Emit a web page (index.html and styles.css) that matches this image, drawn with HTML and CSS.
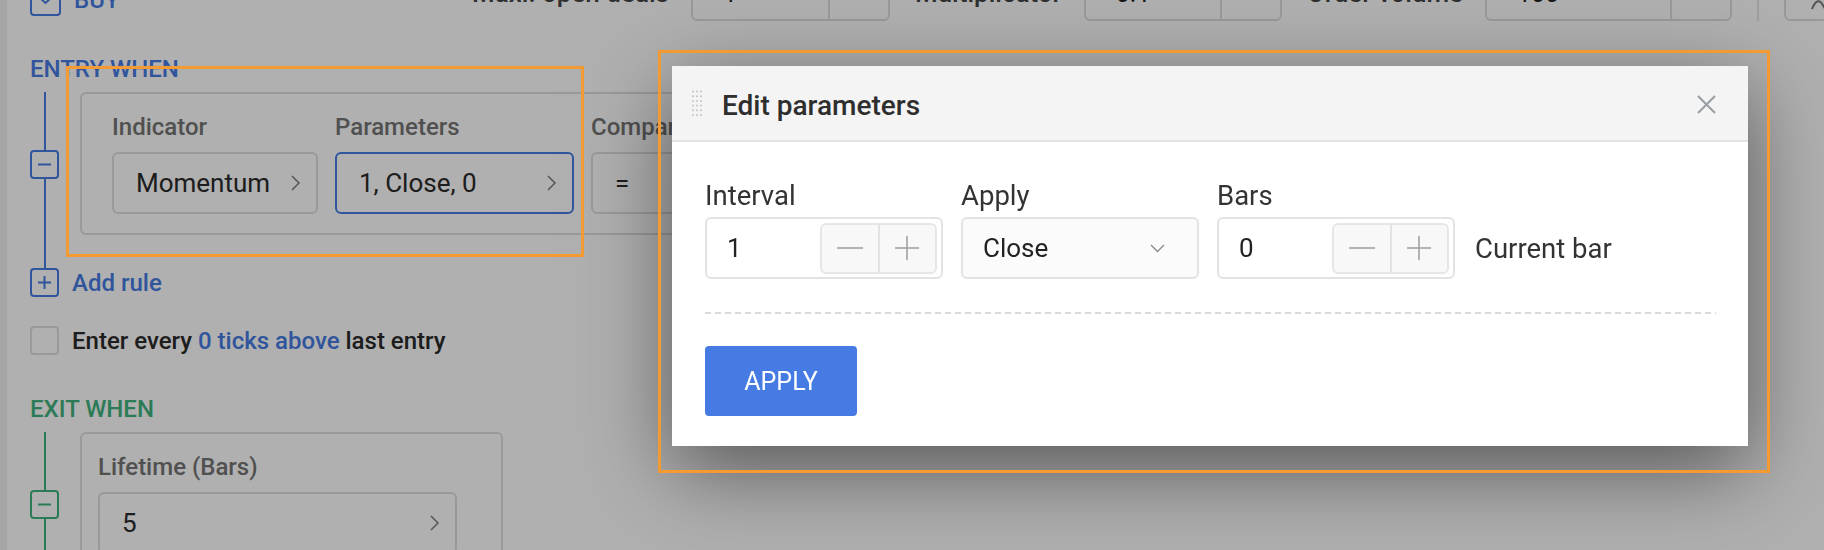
FILE: index.html
```html
<!DOCTYPE html>
<html lang="en">
<head>
    <meta charset="UTF-8">
    <meta name="viewport" content="width=device-width, initial-scale=1.0">
    <title>Edit parameters</title>
    <link rel="stylesheet" href="styles.css">
</head>
<body>

<div class="page">
    <div class="topbar">
        <div class="side">
            <span class="tbox blue">
                <svg width="17" height="10" viewBox="0 0 17 10"><polyline points="1.5,1.5 8.5,8 15.5,1.5" fill="none" stroke="currentColor" stroke-width="2"/></svg>
            </span>
            <span class="side-name">BUY</span>
        </div>
        <div class="field">
            <span class="field-label">Maxi. open deals</span>
            <div class="num-box w-deals"><span class="num-val">1</span><span class="num-btn"></span></div>
        </div>
        <div class="field">
            <span class="field-label">Multiplicator</span>
            <div class="num-box w-mult"><span class="num-val">0.1</span><span class="num-btn"></span></div>
        </div>
        <div class="field">
            <span class="field-label">Order volume</span>
            <div class="num-box w-vol"><span class="num-val">100</span><span class="num-btn"></span></div>
        </div>
        <span class="vsep"></span>
        <div class="tool-box">
            <svg width="30" height="20" viewBox="0 0 30 20"><path d="M2 14 C6 4, 10 4, 14 12 S22 20, 28 8" fill="none" stroke="#777" stroke-width="2"/></svg>
        </div>
    </div>

    <div class="section-title">ENTRY WHEN</div>
    <div class="tree blue">
        <div class="tree-row">
            <div class="rail">
                <span class="rail-line top"></span>
                <span class="tbox">
                    <svg width="13" height="13" viewBox="0 0 13 13"><line x1="0" y1="6.5" x2="13" y2="6.5" stroke="currentColor" stroke-width="2"/></svg>
                </span>
                <span class="rail-line rest"></span>
            </div>
            <div class="rule-card">
                <div class="rule-col">
                    <div class="rule-label">Indicator</div>
                    <div class="pick w-ind">Momentum
                        <svg class="chev" width="9" height="16" viewBox="0 0 9 16"><polyline points="1,1 8,8 1,15" fill="none" stroke="currentColor" stroke-width="1.5"/></svg>
                    </div>
                </div>
                <div class="rule-col">
                    <div class="rule-label">Parameters</div>
                    <div class="pick w-par active">1, Close, 0
                        <svg class="chev" width="9" height="16" viewBox="0 0 9 16"><polyline points="1,1 8,8 1,15" fill="none" stroke="currentColor" stroke-width="1.5"/></svg>
                    </div>
                </div>
                <div class="rule-col">
                    <div class="rule-label">Comparison</div>
                    <div class="pick w-cmp">=
                        <svg class="chev" width="9" height="16" viewBox="0 0 9 16"><polyline points="1,1 8,8 1,15" fill="none" stroke="currentColor" stroke-width="1.5"/></svg>
                    </div>
                </div>
            </div>
        </div>
        <div class="add-row">
            <span class="tbox">
                <svg width="13" height="13" viewBox="0 0 13 13"><line x1="0" y1="6.5" x2="13" y2="6.5" stroke="currentColor" stroke-width="2"/><line x1="6.5" y1="0" x2="6.5" y2="13" stroke="currentColor" stroke-width="2"/></svg>
            </span>
            <span class="add-text">Add rule</span>
        </div>
    </div>

    <div class="check-row">
        <span class="cbox"></span>
        <span class="check-text">Enter every <span class="link">0 ticks above</span> last entry</span>
    </div>

    <div class="section-title exit">EXIT WHEN</div>
    <div class="tree green">
        <div class="tree-row">
            <div class="rail">
                <span class="rail-line top"></span>
                <span class="tbox">
                    <svg width="13" height="13" viewBox="0 0 13 13"><line x1="0" y1="6.5" x2="13" y2="6.5" stroke="currentColor" stroke-width="2"/></svg>
                </span>
                <span class="rail-line rest"></span>
            </div>
            <div class="rule-card life-card">
                <div class="rule-col">
                    <div class="rule-label">Lifetime (Bars)</div>
                    <div class="pick w-life">5
                        <svg class="chev" width="9" height="16" viewBox="0 0 9 16"><polyline points="1,1 8,8 1,15" fill="none" stroke="currentColor" stroke-width="1.5"/></svg>
                    </div>
                </div>
            </div>
        </div>
    </div>
</div>

<div class="mask"></div>

<div class="modal">
    <div class="modal-head">
        <svg class="grip" width="10" height="26" viewBox="0 0 10 26">
            <g fill="#c4c4c4">
                <circle cx="1" cy="1.5" r="1"/><circle cx="5" cy="1.5" r="1"/><circle cx="9" cy="1.5" r="1"/>
                <circle cx="1" cy="6.2" r="1"/><circle cx="5" cy="6.2" r="1"/><circle cx="9" cy="6.2" r="1"/>
                <circle cx="1" cy="10.9" r="1"/><circle cx="5" cy="10.9" r="1"/><circle cx="9" cy="10.9" r="1"/>
                <circle cx="1" cy="15.6" r="1"/><circle cx="5" cy="15.6" r="1"/><circle cx="9" cy="15.6" r="1"/>
                <circle cx="1" cy="20.3" r="1"/><circle cx="5" cy="20.3" r="1"/><circle cx="9" cy="20.3" r="1"/>
                <circle cx="1" cy="25" r="1"/><circle cx="5" cy="25" r="1"/><circle cx="9" cy="25" r="1"/>
            </g>
        </svg>
        <span class="modal-title">Edit parameters</span>
        <svg class="close" width="19" height="19" viewBox="0 0 19 19"><line x1="1" y1="1" x2="18" y2="18" stroke="#9a9fa5" stroke-width="2.2"/><line x1="18" y1="1" x2="1" y2="18" stroke="#9a9fa5" stroke-width="2.2"/></svg>
    </div>
    <div class="modal-body">
        <div class="param-row">
            <div class="param">
                <label>Interval</label>
                <div class="param-input">1
                    <div class="stepper">
                        <span><svg width="26" height="2" viewBox="0 0 26 2"><line x1="0" y1="1" x2="26" y2="1" stroke="#9c9c9c" stroke-width="1.5"/></svg></span>
                        <span><svg width="24" height="24" viewBox="0 0 24 24"><line x1="0" y1="12" x2="24" y2="12" stroke="#9c9c9c" stroke-width="1.5"/><line x1="12" y1="0" x2="12" y2="24" stroke="#9c9c9c" stroke-width="1.5"/></svg></span>
                    </div>
                </div>
            </div>
            <div class="param">
                <label>Apply</label>
                <div class="param-input select">Close
                    <svg width="15" height="9" viewBox="0 0 15 9"><polyline points="1,1 7.5,7.5 14,1" fill="none" stroke="#8a8a8a" stroke-width="1.4"/></svg>
                </div>
            </div>
            <div class="param">
                <label>Bars</label>
                <div class="param-input">0
                    <div class="stepper">
                        <span><svg width="26" height="2" viewBox="0 0 26 2"><line x1="0" y1="1" x2="26" y2="1" stroke="#9c9c9c" stroke-width="1.5"/></svg></span>
                        <span><svg width="24" height="24" viewBox="0 0 24 24"><line x1="0" y1="12" x2="24" y2="12" stroke="#9c9c9c" stroke-width="1.5"/><line x1="12" y1="0" x2="12" y2="24" stroke="#9c9c9c" stroke-width="1.5"/></svg></span>
                    </div>
                </div>
            </div>
            <div class="param-note">Current bar</div>
        </div>
        <div class="dash"></div>
        <button class="apply-btn">APPLY</button>
    </div>
</div>

<div class="mark mark-rule"></div>
<div class="mark mark-modal"></div>

</body>
</html>
```

FILE: styles.css
```css
* { box-sizing: border-box; }
body {
    margin: 0; width: 1824px; height: 550px; overflow: hidden;
    background: #fff; color: #333;
    font-family: Roboto, "Liberation Sans", sans-serif;
}
.page { display: flow-root; height: 550px; border-left: 7px solid #f1f1f1; padding-left: 23px; }

/* top bar, scrolled mostly out of view */
.topbar { display: flex; align-items: center; gap: 25px; height: 56px; margin-top: -35px; }
.side { flex: 1; display: flex; align-items: center; gap: 13px; margin-top: 14px; }
.side-name { font-size: 24px; font-weight: 500; color: #467be3; }
.field { display: flex; align-items: center; gap: 22px; }
.field-label { font-size: 26px; font-weight: 500; color: #444; white-space: nowrap; }
.num-box { display: flex; height: 56px; border: 2px solid #dedede; border-radius: 6px; }
.num-val { flex: 1; display: flex; align-items: center; padding-left: 30px; font-size: 25px; color: #222; }
.num-btn { width: 60px; border-left: 2px solid #dedede; }
.w-deals { width: 199px; }
.w-mult { width: 198px; }
.w-vol { width: 247px; }
.vsep { width: 2px; height: 56px; background: #e6e6e6; }
.tool-box {
    width: 62px; height: 56px; margin-right: -22px;
    border: 2px solid #dedede; border-radius: 6px;
    display: flex; align-items: flex-end; justify-content: flex-end; padding: 0 4px 4px 0;
}

/* rule tree */
.blue { color: #467be3; }
.green { color: #41b37f; }
.section-title { margin-top: 34px; font-size: 24px; line-height: 28px; font-weight: 500; color: #467be3; }
.section-title.exit { margin-top: 40px; color: #41b37f; }
.tree { margin-top: 9px; }
.tree-row { display: flex; gap: 21px; }
.rail { width: 29px; flex-shrink: 0; display: flex; flex-direction: column; align-items: center; }
.rail-line { width: 2px; background: currentColor; }
.rail-line.top { height: 58px; }
.rail-line.rest { flex: 1; }
.tbox {
    width: 29px; height: 29px; flex-shrink: 0;
    border: 2px solid currentColor; border-radius: 4px;
    display: flex; align-items: center; justify-content: center;
}
.side .tbox { width: 31px; height: 31px; }

.rule-card {
    display: flex; gap: 17px; align-self: flex-start;
    border: 2px solid #dedede; border-radius: 6px;
    padding: 19px 30px; margin-bottom: 33px; color: #2a2a2a;
}
.life-card { width: 423px; padding: 19px 44px 19px 16px; }
.rule-label { font-size: 24px; line-height: 28px; font-weight: 500; color: #757575; margin-bottom: 11px; white-space: nowrap; }
.pick {
    height: 62px; display: flex; align-items: center; justify-content: space-between;
    border: 2px solid #dedede; border-radius: 6px;
    padding: 0 16px 0 22px; font-size: 26px; color: #2a2a2a; white-space: nowrap;
}
.pick.active { border-color: #467be3; }
.chev { color: #7b7b7b; flex-shrink: 0; }
.w-ind { width: 206px; }
.w-par { width: 239px; }
.w-cmp { width: 240px; }
.w-life { width: 359px; }

.add-row { display: flex; align-items: center; gap: 13px; }
.add-text { font-size: 24px; font-weight: 500; color: #467be3; }
.check-row { display: flex; align-items: center; gap: 13px; margin-top: 29px; }
.cbox { width: 29px; height: 29px; border: 2px solid #dedede; border-radius: 4px; background: #fff; }
.check-text { font-size: 24px; font-weight: 500; color: #2a2a2a; }
.link { color: #467be3; }

/* overlay */
.mask { position: fixed; inset: 0; background: rgba(0, 0, 0, 0.31); z-index: 2; }

.modal {
    position: absolute; left: 672px; top: 66px; width: 1076px; z-index: 3;
    background: #fff; box-shadow: 0 24px 80px rgba(0, 0, 0, 0.5);
}
.modal-head {
    height: 76px; display: flex; align-items: center;
    padding: 0 32px 0 20px;
    background: #f4f4f4; border-bottom: 2px solid #e3e3e3;
}
.grip { margin-right: 20px; }
.modal-title { margin-top: 4px; font-size: 28px; font-weight: 500; color: #2e2e2e; }
.close { margin-left: auto; margin-top: 2px; }

.modal-body { padding: 38px 32px 30px 33px; }
.param-row { display: flex; align-items: flex-end; gap: 18px; }
.param label { display: block; font-size: 27.5px; line-height: 32px; margin-bottom: 5px; color: #333; }
.param-input {
    width: 238px; height: 62px; display: flex; align-items: center;
    border: 2px solid #e3e3e3; border-radius: 6px;
    padding-left: 20px; font-size: 26px; color: #222;
}
.param-input.select { justify-content: space-between; padding-right: 32px; background: #fbfbfb; }
.stepper {
    width: 117px; height: 51px; margin-left: auto; margin-right: 4px; display: flex;
    border: 2px solid #e6e6e6; border-radius: 6px; background: #f8f8f8;
}
.stepper span { flex: 1; display: flex; align-items: center; justify-content: center; }
.stepper span + span { border-left: 2px solid #e3e3e3; }
.param-note { height: 62px; display: flex; align-items: center; margin-left: 2px; font-size: 27.5px; color: #333; }
.dash { margin-top: 33px; height: 2px; background: repeating-linear-gradient(90deg, #dadada 0 6px, transparent 6px 10px); }
.apply-btn {
    display: block; margin-top: 32px; width: 152px; height: 70px;
    border: none; border-radius: 4px; background: #467be3; color: #fff;
    font-family: inherit; font-size: 25px; cursor: pointer;
}

/* orange annotation boxes */
.mark { position: absolute; border: 3px solid #f39a33; z-index: 4; pointer-events: none; }
.mark-rule { left: 66px; top: 66px; width: 518px; height: 191px; }
.mark-modal { left: 658px; top: 50px; width: 1112px; height: 423px; }
```
